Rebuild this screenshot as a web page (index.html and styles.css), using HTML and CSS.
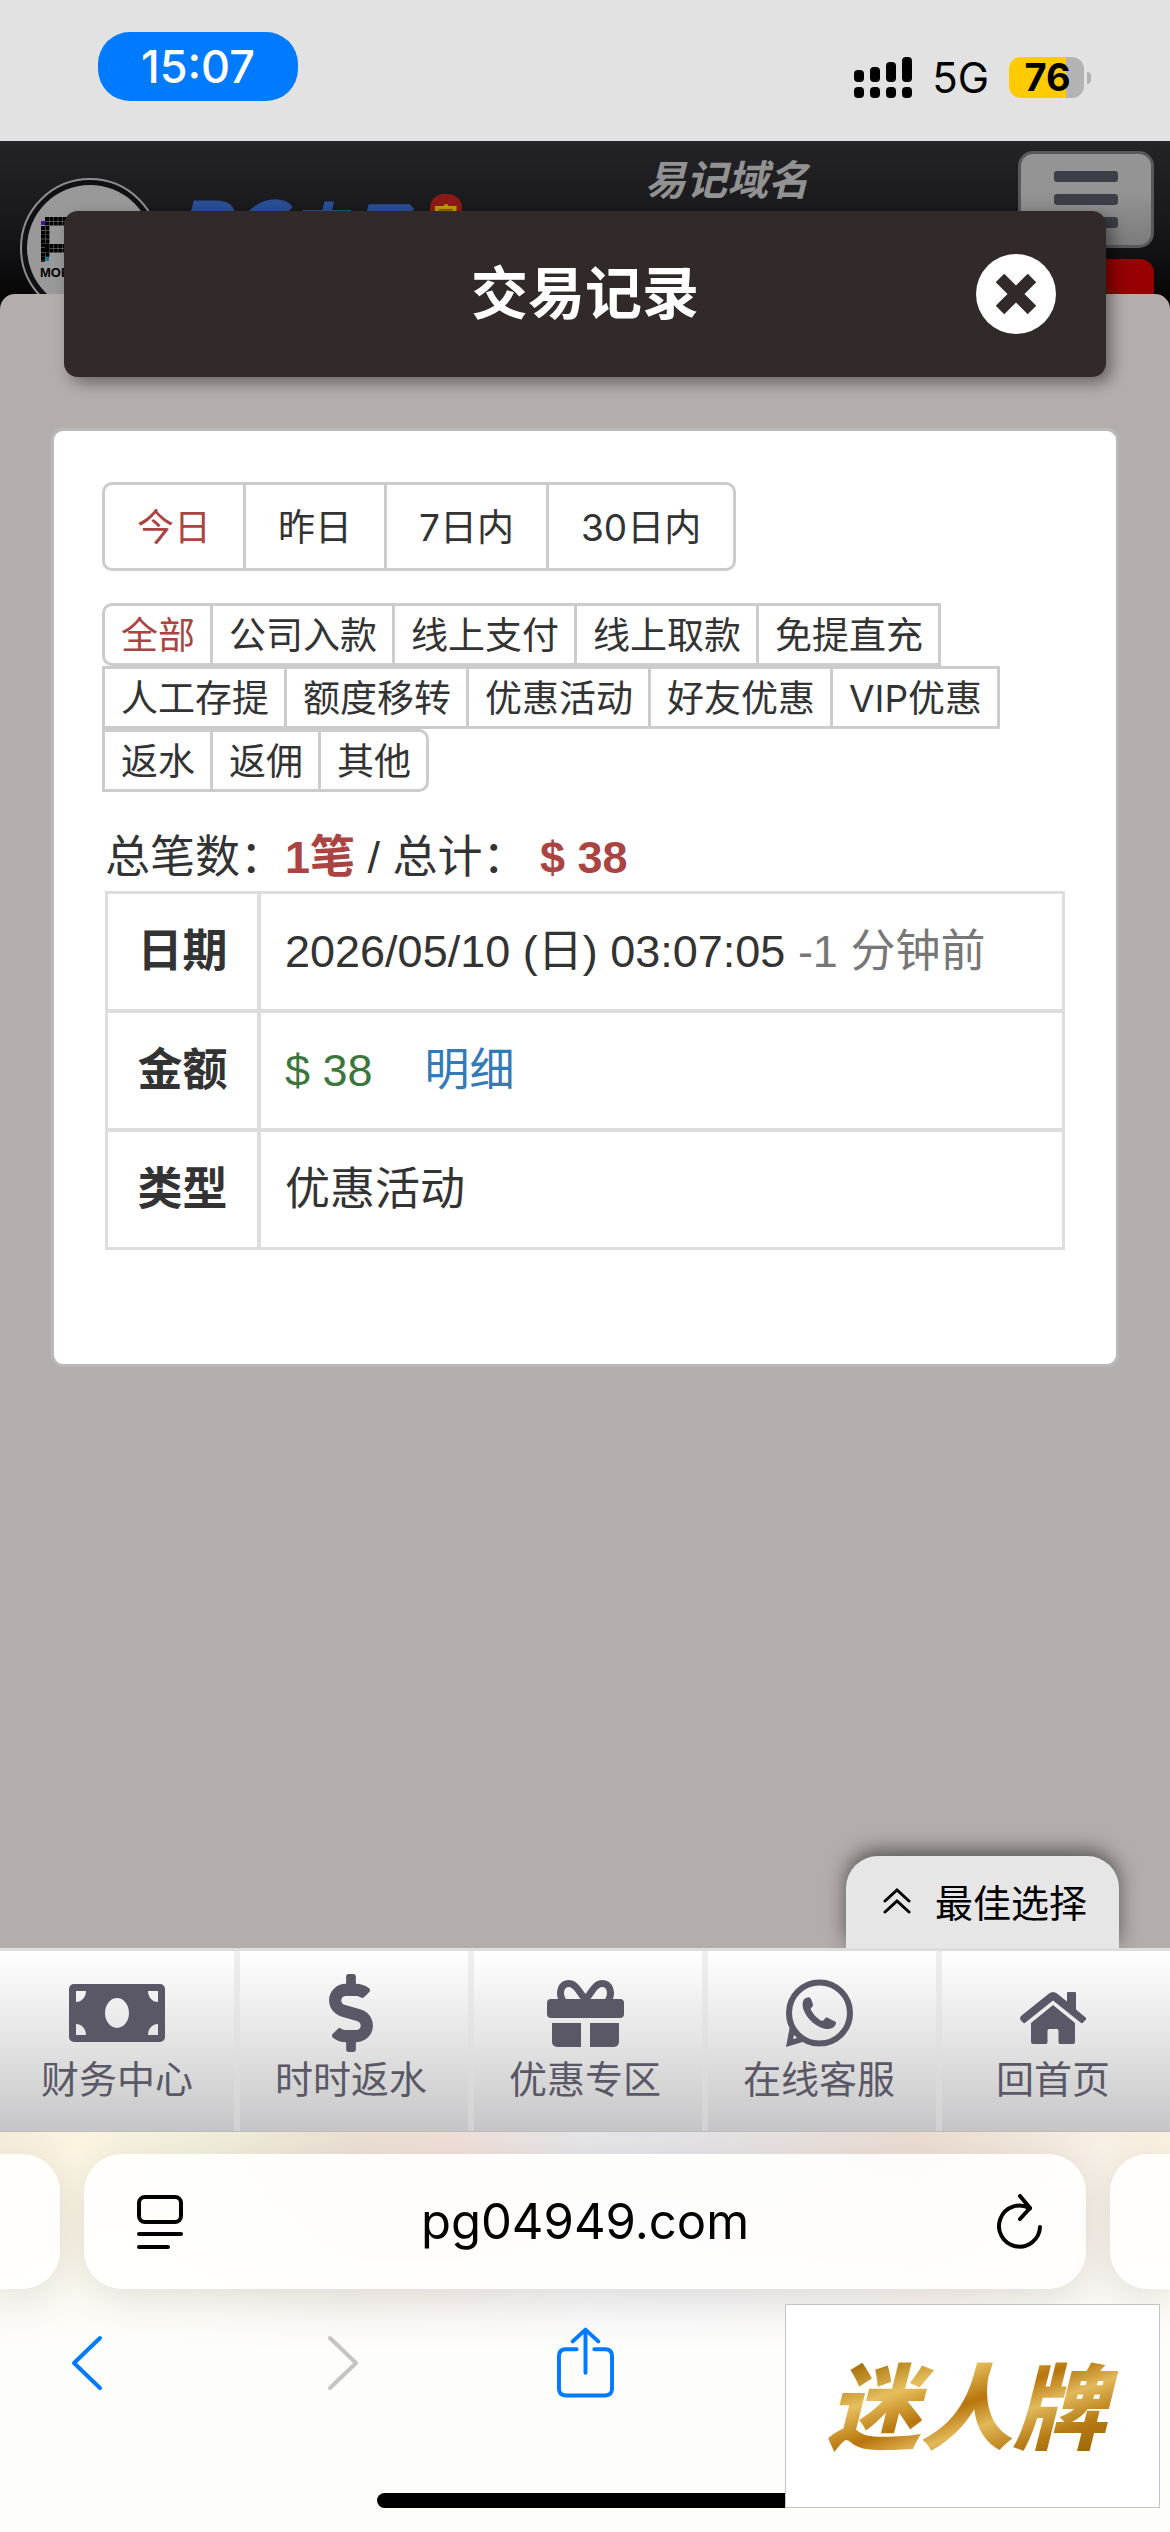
FILE: index.html
```html
<!DOCTYPE html>
<html lang="zh-CN">
  <head>
    <meta charset="UTF-8" />
    <meta name="viewport" content="width=device-width, initial-scale=1.0" />
    <title>交易记录</title>
    <link rel="stylesheet" href="styles.css">
  </head>
  <body>
    <div class="status-bar">
      <span class="clock">15:07</span>
      <div class="status-icons">
        <svg class="signal" viewBox="0 0 58 41" width="58" height="41">
          <rect x="0" y="13" width="10" height="12" rx="4" />
          <rect x="16" y="10" width="10" height="15" rx="4" />
          <rect x="32" y="5" width="10" height="20" rx="4" />
          <rect x="48" y="0" width="10" height="25" rx="4" />
          <rect x="0" y="30" width="10" height="11" rx="4" />
          <rect x="16" y="30" width="10" height="11" rx="4" />
          <rect x="32" y="30" width="10" height="11" rx="4" />
          <rect x="48" y="30" width="10" height="11" rx="4" />
        </svg>
        <span class="network">5G</span>
        <span class="battery">76</span>
      </div>
    </div>

    <header class="site-header">
      <svg class="logo" viewBox="0 0 140 140" width="140" height="140">
        <circle cx="70" cy="70" r="69" fill="#111114" stroke="#8e8e8e" stroke-width="2" />
        <circle cx="70" cy="70" r="63" fill="#999" />
        <g fill="none" stroke="#000" stroke-width="4" stroke-dasharray="4 0.4">
          <path d="M25 41h40M25 45.4h40M25 68h40M25 72.4h40" />
          <path d="M23 48v36M27.4 48v31" />
        </g>
        <rect x="21" y="43" width="4" height="4" fill="#4a0fa8" />
        <rect x="25" y="79" width="4" height="4" fill="#0b7f9a" />
        <text x="20" y="99" class="logo-text">MOBILE</text>
      </svg>
      <div class="brand">
        <span class="brand-latin">PG</span>
        <span class="brand-name">电子</span>
        <span class="seal">官</span>
      </div>
      <span class="domain">易记域名</span>
      <div class="header-side">
        <button class="menu-btn" aria-label="菜单">
          <span></span>
          <span></span>
          <span></span>
        </button>
        <div class="side-tag"></div>
      </div>
    </header>

    <main class="sheet">
      <div class="modal-head">
        <h1>交易记录</h1>
        <button class="close-btn" aria-label="关闭">
          <svg viewBox="0 0 80 80" width="80" height="80">
            <circle cx="40" cy="40" r="40" fill="#fff" />
            <path d="M24 24L56 56M56 24L24 56" stroke="#32292a" stroke-width="12" />
          </svg>
        </button>
      </div>

      <section class="card">
        <div class="btn-group date-group">
          <button class="active">今日</button>
          <button>昨日</button>
          <button>7日内</button>
          <button>30日内</button>
        </div>

        <div class="btn-group type-group">
          <button class="active">全部</button>
          <button>公司入款</button>
          <button>线上支付</button>
          <button>线上取款</button>
          <button>免提直充</button>
          <button>人工存提</button>
          <button>额度移转</button>
          <button>优惠活动</button>
          <button>好友优惠</button>
          <button>VIP优惠</button>
          <button>返水</button>
          <button>返佣</button>
          <button>其他</button>
        </div>

        <p class="summary">总笔数：<b>1笔</b> / 总计： <b>$ 38</b></p>

        <table class="record">
          <tr>
            <th>日期</th>
            <td>2026/05/10 (日) 03:07:05 <span class="muted">-1 分钟前</span></td>
          </tr>
          <tr>
            <th>金额</th>
            <td><span class="money">$ 38</span><a href="#" class="detail">明细</a></td>
          </tr>
          <tr>
            <th>类型</th>
            <td>优惠活动</td>
          </tr>
        </table>
      </section>

      <button class="best-btn">
        <svg viewBox="0 0 28 27" width="28" height="27">
          <path d="M2 14L14 3L26 14M2 25L14 14L26 25" />
        </svg>
        最佳选择
      </button>
    </main>

    <nav class="tab-nav">
      <a href="#">
        <svg viewBox="0 0 96 78" width="96" height="78">
          <path fill-rule="evenodd" d="M5 10h86a5 5 0 0 1 5 5v48a5 5 0 0 1-5 5H5a5 5 0 0 1-5-5V15a5 5 0 0 1 5-5zM7 17v11c6 0 10-5 10-11zM79 17c0 6 4 11 10 11V17zM7 50v11h10c0-6-4-11-10-11zM89 50c-6 0-10 5-10 11h10zM36 39a12 15 0 1 0 24 0a12 15 0 1 0-24 0z" />
        </svg>
        财务中心
      </a>
      <a href="#">
        <svg viewBox="0 0 288 512" width="44" height="78">
          <path d="M209.2 233.4l-108-31.6C88.7 198.2 80 186.5 80 173.5c0-16.3 13.2-29.5 29.5-29.5h66.3c12.2 0 24.2 3.7 34.2 10.5 6.1 4.1 14.3 3.1 19.5-2l34.8-34c7.1-6.9 6.1-18.4-1.8-24.5C238 74.8 207.4 64.1 176 64V16c0-8.8-7.2-16-16-16h-32c-8.8 0-16 7.2-16 16v48h-2.5C45.8 64-5.4 118.7.5 183.6c4.2 46.1 39.4 83.6 83.8 96.6l102.5 30c12.5 3.7 21.2 15.3 21.2 28.3 0 16.3-13.2 29.5-29.5 29.5h-66.3C100 368 88 364.3 78 357.5c-6.1-4.1-14.3-3.1-19.5 2l-34.8 34c-7.1 6.9-6.1 18.4 1.8 24.5 24.5 19.2 55.1 29.9 86.5 30v48c0 8.8 7.2 16 16 16h32c8.8 0 16-7.2 16-16v-48.2c46.6-.9 90.3-28.6 105.7-72.7 21.5-61.6-14.6-124.8-72.5-141.7z" />
        </svg>
        时时返水
      </a>
      <a href="#">
        <svg viewBox="0 -5 77 78" width="77" height="78">
          <path d="M4 20h69a4 4 0 0 1 4 4v11a4 4 0 0 1-4 4H4a4 4 0 0 1-4-4V24a4 4 0 0 1 4-4zM5 44h29v24H10a5 5 0 0 1-5-5zM43 44h29v19a5 5 0 0 1-5 5H43z" />
          <path class="line" d="M38.500 21L31 10.500C28 6.500 25.500 4.500 22 4.500C14 4.500 11 14 16 22M38.500 21L46 10.500C49 6.500 51.500 4.500 55 4.500C63 4.500 66 14 61 22" />
        </svg>
        优惠专区
      </a>
      <a href="#">
        <svg viewBox="0 -6 67 78" width="67" height="78">
          <circle class="ring" cx="33.500" cy="33" r="30.500" />
          <path d="M4 46L0 67L20 61L16 57L7 59L10 48z" />
          <path d="M20 18c-3 1-4 5-3 10 3 11 15 21 25 21 4 0 8-3 8-6 0-1-1-2-2-2l-6-3c-2-1-3 0-4 2-1 1-3 1-4 0-4-3-7-6-9-10-1-2 2-3 2-5 0-1-1-4-2-6-1-2-3-2-5-1z" />
        </svg>
        在线客服
      </a>
      <a href="#">
        <svg viewBox="0 -18 66 78" width="66" height="78">
          <path d="M1 24L29 1.500Q33 -1.500 37 1.500L47 9.500V1Q47 0 48 0H55Q56 0 56 1V17.500L65 25Q67 26 65.500 28L63 30.500Q62 32 60.500 30.500L33 8.500L5.500 30.500Q4 32 3 30.500L.5 28Q-.5 26 1 24z" />
          <path d="M33 13L55 31V50Q55 52 53 52H40Q38.500 52 38.500 50V39Q38.500 37 37 37H29Q27.500 37 27.500 39V50Q27.500 52 26 52H13Q11 52 11 50V31z" />
        </svg>
        回首页
      </a>
    </nav>

    <footer class="browser">
      <div class="address-row">
        <div class="pill pill-prev"></div>
        <div class="pill address">
          <button aria-label="页面菜单">
            <svg viewBox="0 0 46 54" width="46" height="54" stroke="#000">
              <rect x="2" y="2" width="42" height="25" rx="6" />
              <path d="M2 39h42M2 52h29" />
            </svg>
          </button>
          <input type="text" value="pg04949.com" aria-label="网址">
          <button aria-label="重新载入">
            <svg viewBox="0 0 46 56" width="46" height="56" stroke="#000">
              <path d="M43 33A20.500 20.500 0 1 1 33 14.500" />
              <path d="M23 2L33 14L23 25" />
            </svg>
          </button>
        </div>
        <div class="pill pill-next"></div>
      </div>

      <div class="toolbar">
        <button class="back" aria-label="后退">
          <svg viewBox="0 0 32 56" width="32" height="56"><path d="M29 3L3 28L29 53" /></svg>
        </button>
        <button class="forward" aria-label="前进">
          <svg viewBox="0 0 32 56" width="32" height="56"><path d="M3 3L29 28L3 53" /></svg>
        </button>
        <button aria-label="分享">
          <svg viewBox="0 0 58 72" width="58" height="72">
            <path d="M20 22H9Q2 22 2 29V62Q2 69 9 69H49Q56 69 56 62V29Q56 22 49 22H38M29 46V3M16 14L29 2L42 14" />
          </svg>
        </button>
      </div>
      <div class="home-indicator"></div>
      <div class="ad"><span>迷人牌</span></div>
    </footer>
  </body>
</html>
```
FILE: styles.css
```css
* {
  box-sizing: border-box;
}

body {
  margin: 0;
  min-height: 100vh;
  display: flex;
  flex-direction: column;
  font-family: "Liberation Sans", "Noto Sans CJK SC", sans-serif;
  background-color: #b4adad;
  color: #333;
}

button {
  border: none;
  padding: 0;
  background: none;
  font-family: inherit;
  color: inherit;
  cursor: pointer;
}

svg {
  display: block;
}

/* status bar */
.status-bar {
  height: 141px;
  padding: 32px 79px 0 98px;
  display: flex;
  justify-content: space-between;
  align-items: flex-start;
  background-color: #e2e2e2;
  font-family: Inter, sans-serif;
  color: #000;
}

.clock {
  width: 200px;
  line-height: 69px;
  border-radius: 32px;
  background-color: #007aff;
  color: white;
  font-size: 45px;
  font-weight: 500;
  text-align: center;
}

.status-icons {
  display: flex;
  align-items: center;
  gap: 20px;
  padding-top: 25px;
}

.network {
  font-size: 42px;
  line-height: 41px;
}

.battery {
  position: relative;
  width: 75px;
  margin-right: 7px;
  padding-left: 2px;
  line-height: 41px;
  border-radius: 12px;
  background: linear-gradient(to right, #fecb00 57px, #b3b3b3 57px);
  font-size: 38px;
  font-weight: 700;
  text-align: center;
}

.battery::after {
  content: "";
  position: absolute;
  left: 78px;
  top: 15px;
  width: 4px;
  height: 12px;
  border-radius: 0 4px 4px 0;
  background-color: #b3b3b3;
}

/* site header */
.site-header {
  height: 168px;
  display: grid;
  grid-template-columns: 140px 1fr 373px 136px;
  align-items: start;
  padding: 0 16px 0 20px;
  background: linear-gradient(#242428, #18181b 50%, #030303);
  overflow: hidden;
}

.logo {
  margin-top: 37px;
}

.logo-text {
  font-size: 13px;
  font-weight: 700;
}

.brand {
  display: flex;
  align-items: flex-start;
  padding: 48px 0 0 12px;
  font-family: "Noto Sans CJK SC", sans-serif;
  font-weight: 900;
  font-style: italic;
  color: #2a4f96;
}

.brand-latin {
  font-size: 80px;
  line-height: 72px;
}

.brand-name {
  font-size: 62px;
  line-height: 76px;
}

.seal {
  width: 32px;
  margin: 5px 0 0 20px;
  border-radius: 14px;
  background-color: #8b1a16;
  color: #b5a200;
  font-size: 24px;
  line-height: 42px;
  font-style: normal;
  text-align: center;
}

.domain {
  padding-top: 16px;
  font-size: 41px;
  line-height: 48px;
  font-weight: 700;
  font-style: italic;
  color: #929292;
}

.header-side {
  display: flex;
  flex-direction: column;
  gap: 11px;
  padding-top: 10px;
}

.menu-btn {
  height: 97px;
  display: flex;
  flex-direction: column;
  align-items: center;
  justify-content: center;
  gap: 12px;
  border: 3px solid #58585c;
  border-radius: 15px;
  background: linear-gradient(#949494 40%, #7b7b7b);
}

.menu-btn span {
  width: 64px;
  height: 11px;
  border-radius: 3px;
  background-color: #3e3e48;
}

.side-tag {
  height: 60px;
  border-radius: 14px;
  background-color: #960000;
}

/* sheet with the modal */
.sheet {
  position: relative;
  flex: 1;
  display: flex;
  flex-direction: column;
  margin-top: -15px;
  border-radius: 15px 15px 0 0;
  background-color: #b4adad;
}

.modal-head {
  display: grid;
  grid-template-columns: 80px 1fr 80px;
  align-items: center;
  height: 166px;
  margin: -83px 64px 51px;
  padding: 0 50px;
  border-radius: 14px;
  background-color: #32292a;
  color: white;
  box-shadow: 6px 6px 15px rgba(0, 0, 0, 0.4);
}

.modal-head h1 {
  grid-column: 2;
  margin: 0;
  font-size: 57px;
  line-height: 64px;
  text-align: center;
}

.card {
  min-height: 939px;
  margin: 0 51px;
  padding: 51px 48px;
  border: 3px solid #b9b9b9;
  border-radius: 12px;
  background-color: white;
}

.btn-group {
  display: flex;
  flex-wrap: wrap;
  padding-left: 3px;
}

.btn-group button {
  margin-left: -3px;
  border: 3px solid #ccc;
  font-family: Inter, "Noto Sans CJK SC", sans-serif;
  font-size: 37px;
}

.btn-group button:first-child {
  border-radius: 10px 0 0 10px;
}

.btn-group button:last-child {
  border-radius: 0 10px 10px 0;
}

.btn-group .active {
  color: #a94442;
}

.date-group button {
  height: 89px;
  padding: 0 32px 4px;
}

.type-group {
  margin-top: 32px;
}

.type-group button {
  height: 63px;
  padding: 0 15px 3px 16px;
}

.summary {
  margin: 34px 3px 2px;
  font-size: 45px;
  line-height: 63px;
  white-space: nowrap;
}

.summary b {
  color: #a94442;
}

.record {
  width: calc(100% - 6px);
  margin: 0 3px;
  border: 1px solid #ddd;
  border-spacing: 0;
  font-size: 45px;
}

.record th,
.record td {
  height: 119px;
  border: 2px solid #ddd;
  padding: 0 24px 8px;
  text-align: left;
}

.record th {
  width: 153px;
  text-align: center;
}

.muted {
  color: #777;
}

.money {
  color: #3c763d;
}

.detail {
  margin-left: 52px;
  color: #337ab7;
  text-decoration: none;
}

.best-btn {
  display: flex;
  align-items: center;
  justify-content: center;
  gap: 24px;
  width: 273px;
  height: 92px;
  margin: auto 51px 0 auto;
  padding: 0 0 3px 5px;
  border-radius: 32px 32px 0 0;
  background-color: #e6e6e6;
  color: #000;
  font-size: 38px;
  box-shadow: 0 -6px 20px rgba(0, 0, 0, 0.5);
}

.best-btn svg {
  fill: none;
  stroke: #000;
  stroke-width: 3;
  stroke-linecap: round;
}

/* bottom nav */
.tab-nav {
  position: relative;
  display: grid;
  grid-template-columns: repeat(5, 1fr);
  border-top: 3px solid #ddd;
  background: linear-gradient(#fff, #e4e4e4 50%, #c6c6c8);
}

.tab-nav a {
  display: flex;
  flex-direction: column;
  align-items: center;
  height: 180px;
  padding-top: 23px;
  color: #5a5866;
  font-size: 38px;
  line-height: 56px;
  text-decoration: none;
}

.tab-nav a + a {
  box-shadow: inset 6px 0 rgba(221, 221, 221, 0.5);
}

.tab-nav svg {
  fill: #5a5866;
}

.tab-nav .line,
.tab-nav .ring {
  fill: none;
  stroke: #5a5866;
  stroke-width: 7;
}

.tab-nav .ring {
  stroke-width: 6;
}

/* browser chrome */
.browser {
  position: relative;
  height: 401px;
  border-top: 1px solid #bbb;
  background:
    linear-gradient(rgba(253, 253, 252, 0), rgba(253, 253, 252, 0.4) 120px, #fdfdfc 220px),
    linear-gradient(to right, #f5ecdc, #fbf4df 80px, #f2f0dc 190px, #ecdfd3 360px, #f0dfd8 460px, #e6e5e8 580px, #e4e3e8 680px, #ecdcd1 920px, #f7efe4 1100px, #f9f0e0);
}

.address-row {
  display: grid;
  grid-template-columns: 60px 1fr 60px;
  gap: 24px;
  padding-top: 22px;
}

.pill {
  height: 135px;
  border-radius: 38px;
  background-color: rgba(255, 255, 254, 0.9);
  box-shadow: 0 8px 40px rgba(0, 0, 0, 0.1);
}

.pill-prev {
  border-radius: 0 38px 38px 0;
}

.pill-next {
  border-radius: 38px 0 0 38px;
}

.address {
  display: flex;
  align-items: center;
  justify-content: space-between;
  padding: 0 43px 0 53px;
}

.address input {
  flex: 1;
  min-width: 0;
  border: none;
  padding: 0 10px 0 0;
  background: none;
  font-family: Inter, sans-serif;
  font-size: 49px;
  color: #000;
  text-align: center;
  outline: none;
}

.browser svg {
  fill: none;
  stroke-width: 4;
  stroke-linecap: round;
  stroke-linejoin: round;
}

.toolbar {
  display: flex;
  align-items: center;
  gap: 186px;
  padding: 38px 71px 0;
}

.toolbar button {
  display: flex;
  justify-content: center;
  width: 57px;
}

.toolbar svg {
  stroke: #007aff;
}

.toolbar .back {
  justify-content: flex-start;
}

.toolbar .forward svg {
  stroke: #c4c4c4;
}

.home-indicator {
  width: 417px;
  height: 15px;
  margin: 94px auto 0;
  border-radius: 8px;
  background-color: #000;
}

/* banner floats over the toolbar */
.ad {
  position: absolute;
  right: 10px;
  bottom: 24px;
  width: 375px;
  height: 204px;
  display: flex;
  align-items: center;
  justify-content: center;
  border: 1px solid #c4c4c4;
  background-color: white;
}

.ad span {
  padding: 0 12px 8px 0;
  font-family: "Noto Sans CJK SC", sans-serif;
  font-size: 93px;
  line-height: 120px;
  font-weight: 900;
  font-style: italic;
  color: transparent;
  background: linear-gradient(160deg, #a8720c 15%, #e6bf5c 32%, #b8750c 48%, #e2b85a 60%, #b57a12 75%, #8c5606);
  background-clip: text;
  -webkit-background-clip: text;
}
```
